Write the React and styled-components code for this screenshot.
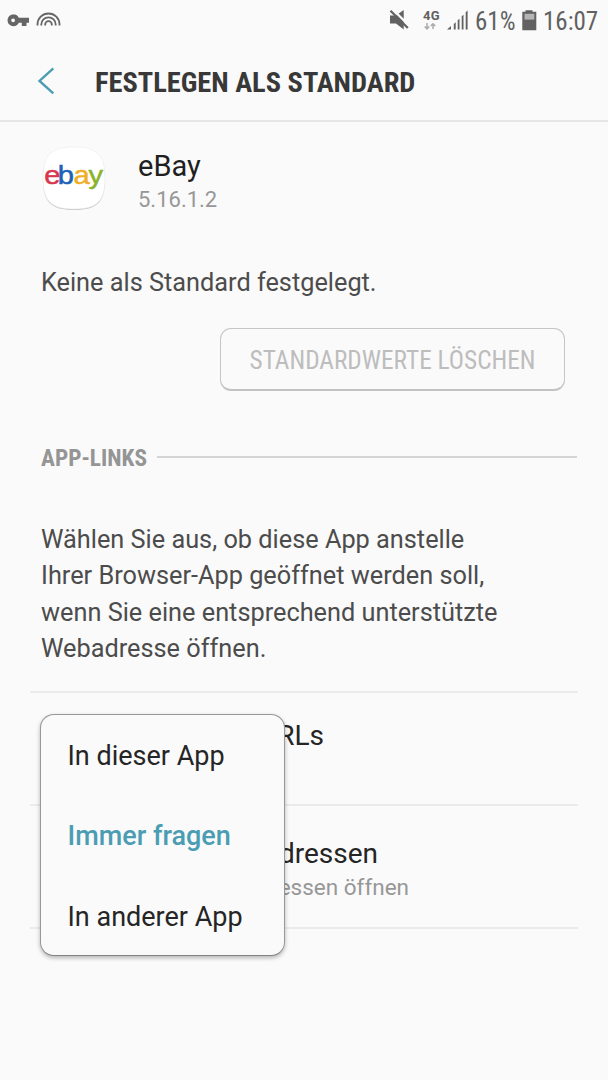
import React, { useState } from "react";
import styled, { createGlobalStyle } from "styled-components";

const GlobalStyle = createGlobalStyle`
  * {
    box-sizing: border-box;
  }

  body {
    margin: 0;
    background: #fafafa;
    font-family: Roboto, "Noto Sans", sans-serif;
    color: #252525;
  }
`;

// Styled Components
const Screen = styled.div`
  width: 608px;
  height: 1080px;
  overflow: hidden;
  background: #fafafa;
`;

const StatusBar = styled.div`
  display: flex;
  justify-content: space-between;
  height: 40px;
  color: #616161;
`;

const StatusIcons = styled.svg`
  display: block;
  flex: none;
`;

const StatusRight = styled.div`
  display: flex;
  height: 40px;
`;

const StatusText = styled.span`
  width: ${(props) => props.$width}px;
  font-family: "Roboto Condensed", Roboto, sans-serif;
  font-stretch: 75%;
  font-size: 25px;
  line-height: 43px;
  white-space: nowrap;
`;

const Network = styled.span`
  display: flex;
  flex-direction: column;
  width: 24px;
  padding-top: 8px;
  font-size: 13px;
  font-weight: 700;
  line-height: 15px;
  letter-spacing: 0.3px;
`;

const TitleBar = styled.header`
  display: flex;
  align-items: center;
  height: 82px;
  padding-left: 36px;
  border-bottom: 2px solid #e6e6e6;
`;

const BackButton = styled.button`
  width: 59px;
  height: 32px;
  padding: 0;
  border: 0;
  background: none;
  text-align: left;
`;

const Title = styled.h1`
  margin: 5px 0 0;
  font-family: "Roboto Condensed", Roboto, sans-serif;
  font-stretch: 75%;
  font-size: 28.4px;
  font-weight: 700;
  line-height: 35px;
  color: #383838;
  white-space: nowrap;
`;

const AppInfo = styled.section`
  display: flex;
  height: 104px;
  padding: 24px 0 0 42px;
`;

const AppIcon = styled.svg`
  display: block;
  flex: none;
  width: 66px;
  height: 68px;
`;

const AppText = styled.div`
  padding: 2px 0 0 30px;
`;

const AppName = styled.div`
  font-size: 29px;
  line-height: 36px;
  color: #1f1f1f;
`;

const AppVersion = styled.div`
  font-size: 22px;
  line-height: 31px;
  color: #979797;
`;

const Paragraph = styled.p`
  margin: 0;
  padding: ${(props) => props.$top}px 0 0 41px;
  font-size: 25.3px;
  line-height: 36.5px;
  color: #4c4c4c;
  white-space: pre-line;
`;

const ButtonRow = styled.div`
  display: flex;
  justify-content: flex-end;
  padding: 26px 43px 0 0;
`;

const ClearButton = styled.button`
  width: 345px;
  height: 63px;
  padding: 3px 0 0;
  border: 1px solid #c6c6c6;
  border-bottom: 2px solid #c2c2c2;
  border-radius: 11px;
  background: #fafafa;
  font-family: "Roboto Condensed", Roboto, sans-serif;
  font-stretch: 75%;
  font-size: 25.3px;
  color: #bdbdbd;
  white-space: nowrap;
`;

const SectionHeading = styled.div`
  display: flex;
  align-items: center;
  height: 30px;
  margin: 51px 31px 0 41px;
`;

const SectionLabel = styled.h2`
  width: 116px;
  margin: 3px 0 0;
  font-family: "Roboto Condensed", Roboto, sans-serif;
  font-stretch: 75%;
  font-size: 23.3px;
  font-weight: 700;
  line-height: 30px;
  color: #959595;
  white-space: nowrap;
`;

const SectionLine = styled.div`
  flex: 1;
  height: 2px;
  background: #d4d4d4;
`;

const Settings = styled.section`
  position: relative;
  margin: 23px 30px 0;
  border-top: 2px solid #ebebeb;
`;

const SettingRow = styled.div`
  height: ${(props) => props.$height}px;
  padding: ${(props) => props.$top}px 0 0 11px;
  border-bottom: 2px solid #ebebeb;
`;

const SettingTitle = styled.div`
  width: ${(props) => props.$width}px;
  font-size: 28px;
  line-height: 36px;
  text-align: right;
  white-space: nowrap;
  color: #252525;
`;

const SettingNote = styled.div`
  width: 368px;
  font-size: 22.5px;
  line-height: 31px;
  text-align: right;
  white-space: nowrap;
  color: #979797;
`;

const Menu = styled.div`
  position: absolute;
  top: 21px;
  left: 10px;
  width: 245px;
  height: 242px;
  border: 1px solid #989898;
  border-bottom-color: #838383;
  border-radius: 14px;
  background: #fafafa;
  box-shadow: 0 2px 4px rgba(0, 0, 0, 0.28);
`;

const MenuItem = styled.div`
  height: 80.5px;
  padding-left: 26.5px;
  font-size: 27px;
  font-weight: ${(props) => (props.$active ? 500 : 400)};
  line-height: 82px;
  color: ${(props) => (props.$active ? "#4b9db3" : "#252525")};
  cursor: pointer;
`;

const LogoText = styled.text`
  font-family: "Liberation Sans", Arial, sans-serif;
  font-size: 26px;
  stroke-width: 0.5px;
`;

const options = ["In dieser App", "Immer fragen", "In anderer App"];

const App = () => {
  const [selected, setSelected] = useState("Immer fragen");

  return (
    <Screen>
      <GlobalStyle />
      <StatusBar>
        <StatusIcons width="70" height="40" viewBox="0 0 70 40">
          <path
            fill="#666"
            fillRule="evenodd"
            d="M13.5 14.2a6 6 0 1 0 0 12 6 6 0 0 0 5.3-3.5h3v3.2h4.7v-3.2H29v-4.9H18.8a6 6 0 0 0-5.3-3.6Zm-.4 4.2a1.9 1.9 0 1 1 0 3.8 1.9 1.9 0 0 1 0-3.8Z"
          />
          <g fill="none" stroke="#666" strokeWidth="1.8">
            <path d="M37.5 25.5v-1a11 11 0 0 1 22 0v1" />
            <path d="M41.3 25.5v-1a7.2 7.2 0 0 1 14.4 0v1" />
            <path d="M45.2 25.5v-1a3.3 3.3 0 0 1 6.6 0v1" />
          </g>
        </StatusIcons>
        <StatusRight>
          <StatusIcons width="34" height="40" viewBox="389 0 34 40">
            <path fill="#616161" d="M390 15.5h6l7.7-5.5v19.5l-7.7-6h-6Z" />
            <path stroke="#fafafa" strokeWidth="2.4" d="m392.4 9 17 17" />
            <path stroke="#616161" strokeWidth="2.3" d="m390.5 10.7 17.3 17.3" />
          </StatusIcons>
          <Network>
            4G
            <svg width="16" height="8" viewBox="0 0 16 8">
              <path
                fill="none"
                stroke="#ababab"
                strokeWidth="1.5"
                d="M4 0v5.5M1.7 3.4 4 5.8l2.3-2.4M10 6V1M7.7 3 10 .8 12.3 3"
              />
            </svg>
          </Network>
          <StatusIcons width="28" height="40" viewBox="447 0 28 40">
            <path
              fill="#616161"
              d="M447 29.5 451 26v3.5ZM453.8 24l1.9-1.7v7.2h-1.9ZM457.7 20.3l1.8-1.6v10.8h-1.8ZM461.7 16.3l1.8-1.6v14.8h-1.8ZM465.7 12.2l1.9-1.7v19h-1.9Z"
            />
          </StatusIcons>
          <StatusText $width={47}>61%</StatusText>
          <StatusIcons width="21" height="40" viewBox="522 0 21 40">
            <path fill="#616161" d="M525.5 10.3h7v1.5h3.8v18.4h-14V11.8h3.2Z" />
            <path fill="#b4b4b4" d="M524.5 13.8h9.8v5.8h-9.8Z" />
          </StatusIcons>
          <StatusText $width={65}>16:07</StatusText>
        </StatusRight>
      </StatusBar>

      <TitleBar>
        <BackButton aria-label="Zurück">
          <svg width="20" height="32" viewBox="0 0 20 32">
            <path fill="none" stroke="#4b9db3" strokeWidth="2.4" d="M17.3 4.4 3.5 16.9l13.8 12.5" />
          </svg>
        </BackButton>
        <Title>FESTLEGEN ALS STANDARD</Title>
      </TitleBar>

      <AppInfo>
        <AppIcon viewBox="0 0 66 68">
          <path
            fill="#c0c0c0"
            d="M32 2.4C9 2.4 1 10 1 33s8 31 31 31 31-8 31-31S55 2.4 32 2.4Z"
          />
          <path
            fill="#fff"
            stroke="#eee"
            strokeWidth="0.7"
            d="M32 1C9 1 1 9 1 32s8 31 31 31 31-8 31-31S55 1 32 1Z"
          />
          <LogoText y="38" transform="scale(1.12 1)">
            <tspan x="1.9" fill="#d8384e" stroke="#d8384e">e</tspan>
            <tspan x="14.1" fill="#1c62b9" stroke="#1c62b9">b</tspan>
            <tspan x="28.1" fill="#eeae27" stroke="#eeae27">a</tspan>
            <tspan x="41.5" fill="#89b42b" stroke="#89b42b">y</tspan>
          </LogoText>
        </AppIcon>
        <AppText>
          <AppName>eBay</AppName>
          <AppVersion>5.16.1.2</AppVersion>
        </AppText>
      </AppInfo>

      <Paragraph $top={39}>Keine als Standard festgelegt.</Paragraph>
      <ButtonRow>
        <ClearButton disabled>STANDARDWERTE LÖSCHEN</ClearButton>
      </ButtonRow>

      <SectionHeading>
        <SectionLabel>APP-LINKS</SectionLabel>
        <SectionLine />
      </SectionHeading>
      <Paragraph $top={50}>
        {"Wählen Sie aus, ob diese App anstelle\nIhrer Browser-App geöffnet werden soll,\nwenn Sie eine entsprechend unterstützte\nWebadresse öffnen."}
      </Paragraph>

      <Settings>
        <SettingRow $height={113} $top={25}>
          <SettingTitle $width={283}>App-spezifische URLs</SettingTitle>
        </SettingRow>
        <SettingRow $height={123} $top={30}>
          <SettingTitle $width={337}>Unterstützte Webadressen</SettingTitle>
          <SettingNote>Unterstützte Webadressen öffnen</SettingNote>
        </SettingRow>
        <Menu role="listbox">
          {options.map((option) => (
            <MenuItem
              key={option}
              role="option"
              aria-selected={option === selected}
              $active={option === selected}
              onClick={() => setSelected(option)}
            >
              {option}
            </MenuItem>
          ))}
        </Menu>
      </Settings>
    </Screen>
  );
};

export default App;
